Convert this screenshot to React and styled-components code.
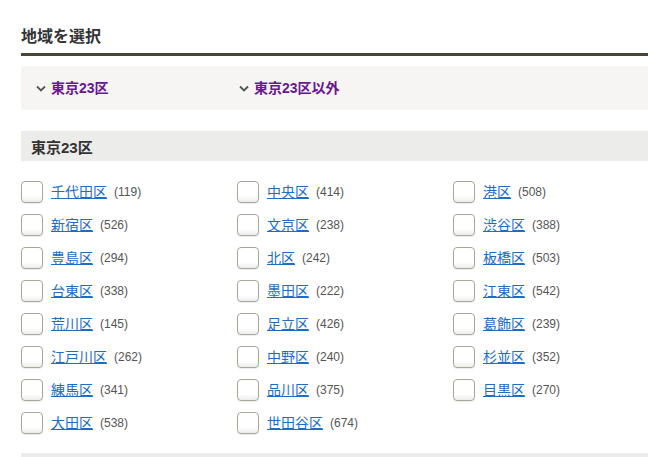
import React from "react"
import styled, { createGlobalStyle } from "styled-components"

const GlobalStyle = createGlobalStyle`
  html, body {
    margin: 0;
    padding: 0;
    background: #ffffff;
    overflow: hidden;
  }
  body {
    font-family: "Liberation Sans", Arial, "Noto Sans CJK JP", sans-serif;
    color: #333333;
  }
`

const wards = [
  ["千代田区", 119], ["中央区", 414], ["港区", 508],
  ["新宿区", 526], ["文京区", 238], ["渋谷区", 388],
  ["豊島区", 294], ["北区", 242], ["板橋区", 503],
  ["台東区", 338], ["墨田区", 222], ["江東区", 542],
  ["荒川区", 145], ["足立区", 426], ["葛飾区", 239],
  ["江戸川区", 262], ["中野区", 240], ["杉並区", 352],
  ["練馬区", 341], ["品川区", 375], ["目黒区", 270],
  ["大田区", 538], ["世田谷区", 674],
]

const Chevron = () => (
  <svg width="10" height="7" viewBox="0 0 10 7">
    <polyline points="1,1.5 5,5.5 9,1.5" fill="none" stroke="#555" strokeWidth="1.8" />
  </svg>
)

const App = () => {
  return (
    <Page>
      <GlobalStyle />
      <Title>地域を選択</Title>
      <Tabs>
        <Tab>
          <Chevron />
          <TabLabel>東京23区</TabLabel>
        </Tab>
        <Tab>
          <Chevron />
          <TabLabel>東京23区以外</TabLabel>
        </Tab>
      </Tabs>
      <SectionHead>東京23区</SectionHead>
      <WardGrid>
        {wards.map(([name, count]) => (
          <Ward key={name}>
            <Box />
            <WardLink href="#">{name}</WardLink>
            <Count>({count})</Count>
          </Ward>
        ))}
      </WardGrid>
      <BottomBar />
    </Page>
  )
}
export default App

const Page = styled.div`
  padding: 25px 0 0 21px;
`

const Title = styled.h2`
  margin: 0;
  font-size: 16px;
  line-height: 24px;
  font-weight: bold;
  color: #333333;
  padding-bottom: 4px;
  border-bottom: 3px solid #4b4336;
`

const Tabs = styled.div`
  margin-top: 10px;
  height: 44px;
  background: #f6f5f3;
  display: flex;
  align-items: center;
  padding-left: 15px;
`

const Tab = styled.div`
  width: 203px;
  display: flex;
  align-items: center;
  gap: 5px;
`

const TabLabel = styled.span`
  font-size: 14px;
  line-height: 20px;
  font-weight: bold;
  color: #6a1591;
`

const SectionHead = styled.div`
  margin-top: 21px;
  height: 30px;
  padding: 3px 0 0 10px;
  box-sizing: border-box;
  line-height: 27px;
  background: #ececea;
  font-size: 15px;
  font-weight: bold;
  color: #333333;
`

const WardGrid = styled.div`
  margin-top: 20px;
  display: grid;
  grid-template-columns: repeat(3, 216px);
  grid-auto-rows: 33px;
`

const Ward = styled.div`
  display: flex;
  align-items: flex-start;
  height: 33px;
`

const Box = styled.span`
  width: 20px;
  height: 20px;
  border: 1px solid #a9a898;
  border-radius: 4px;
  background: linear-gradient(#ffffff 70%, #ededed);
  box-shadow: 0 1px 1px rgba(0, 0, 0, 0.08);
  flex: none;
`

const WardLink = styled.a`
  margin-left: 8px;
  font-size: 14px;
  line-height: 23px;
  color: #1a6dc8;
  text-decoration: underline;
`

const Count = styled.span`
  margin-left: 7px;
  font-size: 12px;
  line-height: 23px;
  color: #555555;
`

const BottomBar = styled.div`
  margin-top: 8px;
  height: 6px;
  background: #ececea;
`
